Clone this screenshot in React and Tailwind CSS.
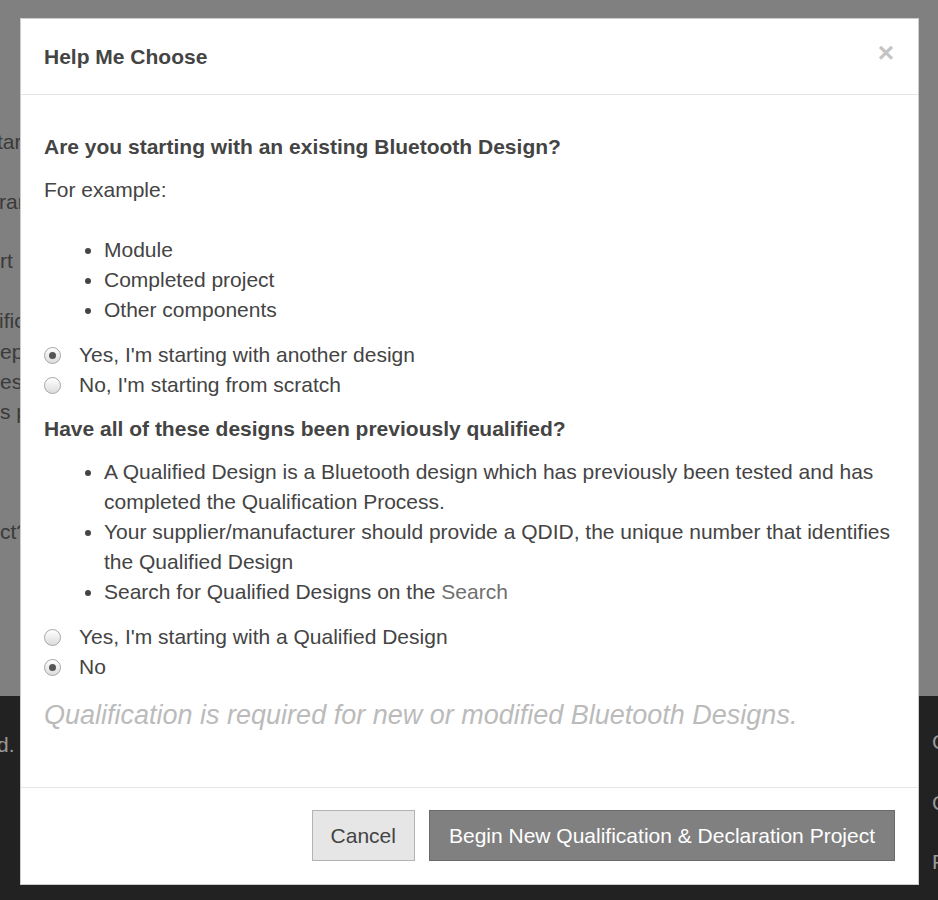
import React from "react";

function Radio({ checked }) {
  return (
    <span className="w-[17px] h-[17px] rounded-full border border-[#a6a6a6] bg-gradient-to-b from-white to-[#dcdcdc] flex items-center justify-center shrink-0">
      {checked && <span className="w-[7px] h-[7px] rounded-full bg-[#555]" />}
    </span>
  );
}

function RadioRow({ checked, children }) {
  return (
    <div className="flex items-center h-[30px]">
      <Radio checked={checked} />
      <span className="ml-[18px]">{children}</span>
    </div>
  );
}

function Frag({ children, cls = "" }) {
  return (
    <div className={"h-[30px] leading-[30px] w-[21px] overflow-hidden whitespace-nowrap " + cls}>
      {children}
    </div>
  );
}

export default function App() {
  return (
    <div
      className="relative w-[938px] h-[900px] overflow-hidden text-[21px]"
      style={{ fontFamily: '"Liberation Sans", Arial, sans-serif' }}
    >
      {/* background page under overlay */}
      <div className="flex flex-col h-full">
        <div className="h-[696px] bg-[#808080] text-[#3a3a3a] flex flex-col">
          <Frag cls="mt-[127px]"><span className="-ml-[3px]">tart</span></Frag>
          <Frag cls="mt-[30px]"><span className="-ml-[1px]">rant</span></Frag>
          <Frag cls="mt-[29px]">rt</Frag>
          <Frag cls="mt-[30px]"><span className="-ml-[1px]">ificat</span></Frag>
          <Frag cls="mt-[1px]">epen</Frag>
          <Frag>est</Frag>
          <Frag>s pr</Frag>
          <Frag cls="mt-[90px]">ct?</Frag>
        </div>
        <div className="flex-1 bg-[#222] text-[#9a9a9a] flex justify-between">
          <div className="flex flex-col">
            <Frag cls="mt-[34px]"><span className="-ml-[3px]">d.</span></Frag>
          </div>
          <div className="flex flex-col w-[20px] pl-[14px] leading-[30px] whitespace-nowrap overflow-hidden">
            <div className="mt-[31px] h-[30px]">C</div>
            <div className="mt-[31px] h-[30px]">C</div>
            <div className="mt-[29px] h-[30px]">F</div>
          </div>
        </div>
      </div>

      {/* modal */}
      <div className="absolute left-[20px] top-[18px] w-[899px] h-[867px] bg-white border border-black/20 flex flex-col text-[#444]">
        <div className="h-[76px] border-b border-[#e5e5e5] px-[23px] flex items-center justify-between shrink-0">
          <h4 className="font-bold leading-[30px] text-[21px] text-[#444]">Help Me Choose</h4>
          <span className="text-[28px] font-bold leading-none text-[#c4c4c4] mr-[1px] -mt-[8px]">×</span>
        </div>

        <div className="flex-1 px-[23px] pt-[37px] leading-[30px]">
          <h5 className="font-bold">Are you starting with an existing Bluetooth Design?</h5>
          <p className="mt-[13px]">For example:</p>
          <ul className="mt-[30px] list-disc pl-[60px]">
            <li>Module</li>
            <li>Completed project</li>
            <li>Other components</li>
          </ul>
          <div className="mt-[15px]">
            <RadioRow checked>Yes, I'm starting with another design</RadioRow>
            <RadioRow>No, I'm starting from scratch</RadioRow>
          </div>
          <h5 className="font-bold mt-[14px]">Have all of these designs been previously qualified?</h5>
          <ul className="mt-[13px] list-disc pl-[60px]">
            <li>A Qualified Design is a Bluetooth design which has previously been tested and has completed the Qualification Process.</li>
            <li>Your supplier/manufacturer should provide a QDID, the unique number that identifies the Qualified Design</li>
            <li>
              Search for Qualified Designs on the <span className="text-[#6f6f6f]">Search</span>
            </li>
          </ul>
          <div className="mt-[15px]">
            <RadioRow>Yes, I'm starting with a Qualified Design</RadioRow>
            <RadioRow checked>No</RadioRow>
          </div>
          <p className="mt-[15px] text-[27px] leading-[36px] italic text-[#bbbbbb]">
            Qualification is required for new or modified Bluetooth Designs.
          </p>
        </div>

        <div className="border-t border-[#e5e5e5] px-[23px] pt-[22px] pb-[23px] flex justify-end gap-[14px] shrink-0">
          <button className="h-[51px] px-[18px] bg-[#e6e6e6] border border-[#b3b3b3] text-[#444] text-[21px]">
            Cancel
          </button>
          <button className="h-[51px] px-[19px] bg-[#808080] border border-[#6a6a6a] text-white text-[21px]">
            Begin New Qualification &amp; Declaration Project
          </button>
        </div>
      </div>
    </div>
  );
}
